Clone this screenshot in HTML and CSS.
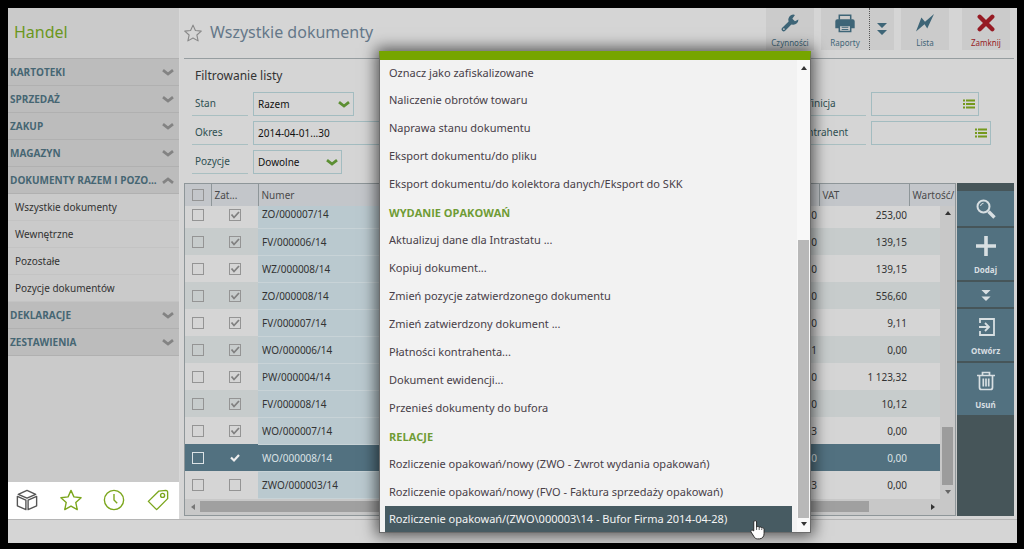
FILE: index.html
```html
<!DOCTYPE html>
<html lang="pl">
<head>
<meta charset="utf-8">
<title>Handel - Wszystkie dokumenty</title>
<link rel="stylesheet" href="styles.css">
</head>
<body>
<svg class="defs" aria-hidden="true">
  <symbol id="chev" viewBox="0 0 12 7"><path d="M1 1.200 6 5 11 1.200" fill="none" stroke="currentColor" stroke-width="2.800"/></symbol>
  <symbol id="list" viewBox="0 0 12 10"><path d="M0 1.500h2M0 5h2M0 8.500h2M3 1.500h9M3 5h9M3 8.500h9" fill="none" stroke="currentColor" stroke-width="1.800"/></symbol>
  <symbol id="dbl" viewBox="0 0 10 12"><path d="M0 0h10L5 5zM0 7h10L5 12z" fill="currentColor"/></symbol>
  <symbol id="star" viewBox="0 0 24 24"><path d="M12 1.500 15.200 8.600l7.800.9-5.800 5.200 1.600 7.800L12 18.600 5.200 22.500l1.600-7.800L1 9.500l7.800-.9z" fill="none" stroke="currentColor" stroke-width="1.500" stroke-linejoin="round"/></symbol>
</svg>
<div class="app">
  <div class="body">
    <aside class="side">
      <h1 class="brand">Handel</h1>
      <nav class="nav">
        <button class="group">KARTOTEKI<svg class="chev"><use href="#chev"/></svg></button>
        <button class="group">SPRZEDAŻ<svg class="chev"><use href="#chev"/></svg></button>
        <button class="group">ZAKUP<svg class="chev"><use href="#chev"/></svg></button>
        <button class="group">MAGAZYN<svg class="chev"><use href="#chev"/></svg></button>
        <button class="group">DOKUMENTY RAZEM I POZO...<svg class="chev up"><use href="#chev"/></svg></button>
        <a class="item" href="#">Wszystkie dokumenty</a>
        <a class="item" href="#">Wewnętrzne</a>
        <a class="item" href="#">Pozostałe</a>
        <a class="item" href="#">Pozycje dokumentów</a>
        <button class="group">DEKLARACJE<svg class="chev"><use href="#chev"/></svg></button>
        <button class="group">ZESTAWIENIA<svg class="chev"><use href="#chev"/></svg></button>
      </nav>
      <div class="tabs">
        <button class="tab dark" aria-label="Moduły"><svg viewBox="0 0 24 24"><path d="M12 1.500 21.500 5.800 12 10 2.500 5.800zM1.500 8 10.800 12.200V22.500L1.500 18.300zM22.500 8 13.200 12.200V22.500l9.300-4.200z"/></svg></button>
        <button class="tab" aria-label="Ulubione"><svg><use href="#star"/></svg></button>
        <button class="tab" aria-label="Historia"><svg viewBox="0 0 24 24"><circle cx="12" cy="12" r="10.500"/><path d="M12 5.500V12l3.500 3.500"/></svg></button>
        <button class="tab" aria-label="Etykiety"><svg viewBox="0 0 24 24"><path d="M1.500 13.500 13 2.300 20.500 1.500q2 0 2 2v7L10.500 22.500z"/><circle cx="17" cy="7" r="2.200"/></svg></button>
      </div>
    </aside>
    <main class="main">
      <header class="head">
        <svg class="fav"><use href="#star"/></svg>
        <h2 class="title">Wszystkie dokumenty</h2>
        <div class="tools">
          <button class="tool"><svg viewBox="0 0 20 20"><path d="M3 17 11 9" stroke="currentColor" stroke-width="4.600" stroke-linecap="round"/><path d="M15.500 1A5.600 5.600 0 1 0 19.300 6l-3.800 2-2.900-2.600z" fill="currentColor"/><circle cx="3.200" cy="16.800" r="1" fill="#cbcbcb"/></svg>Czynności</button>
          <div class="split">
            <button class="tool"><svg class="wide" viewBox="0 0 22 20"><path d="M5 6V1.200h12V6" fill="none" stroke="currentColor" stroke-width="1.600"/><path d="M3 5.500h16a2.200 2.200 0 0 1 2.200 2.200V15h-4v-3.500H4.800V15h-4V7.700A2.200 2.200 0 0 1 3 5.500z" fill="currentColor"/><path d="M5 12v6.500h12V12z" fill="#cbcbcb" stroke="currentColor" stroke-width="1.600"/><path d="M7.500 14h7M7.500 16.300h7" stroke="currentColor"/></svg>Raporty</button>
            <button class="more" aria-label="Więcej raportów"><svg><use href="#dbl"/></svg></button>
          </div>
          <button class="tool"><svg viewBox="0 0 20 20"><path d="M20 0 12.500 16 9.500 11.500 0 19.500 6 4l4 4.500z" fill="currentColor"/></svg>Lista</button>
          <button class="tool close"><svg viewBox="0 0 20 20"><path d="m3 3 14 14M17 3 3 17" stroke="currentColor" stroke-width="4.800" stroke-linecap="round"/></svg>Zamknij</button>
        </div>
      </header>
      <section class="filter">
        <h3 class="filter-title">Filtrowanie listy</h3>
        <div class="fields">
          <div class="row"><label for="stan">Stan</label><div class="ctl w-l"><select id="stan"><option>Razem</option></select><svg class="chev"><use href="#chev"/></svg></div></div>
          <div class="row"><label for="def" class="right-label">Definicja</label><div class="ctl w-l2"><input id="def" type="text"><svg class="list"><use href="#list"/></svg></div></div>
          <div class="row"><label for="okres">Okres</label><div class="ctl w-xl"><input id="okres" type="text" value="2014-04-01...30"></div></div>
          <div class="row"><label for="kon" class="right-label">Kontrahent</label><div class="ctl w-xl2"><input id="kon" type="text"><svg class="list"><use href="#list"/></svg></div></div>
          <div class="row"><label for="poz">Pozycje</label><div class="ctl w-m"><select id="poz"><option>Dowolne</option></select><svg class="chev"><use href="#chev"/></svg></div></div>
        </div>
      </section>
      <section class="work">
        <div class="grid">
          <table>
            <colgroup><col class="c-sel"><col class="c-zat"><col class="c-num"><col class="c-mid"><col class="c-vat"><col class="c-val"></colgroup>
            <thead><tr><th><input type="checkbox" aria-label="Zaznacz wszystkie"></th><th>Zat...</th><th>Numer</th><th></th><th>VAT</th><th>Wartość/</th></tr></thead>
            <tbody>
              <tr><td><input type="checkbox" aria-label="Zaznacz"></td><td><input type="checkbox" aria-label="Zatwierdzony" checked></td><td>ZO/000007/14</td><td>0</td><td>253,00</td><td></td></tr>
              <tr><td><input type="checkbox" aria-label="Zaznacz"></td><td><input type="checkbox" aria-label="Zatwierdzony" checked></td><td>FV/000006/14</td><td>0</td><td>139,15</td><td></td></tr>
              <tr><td><input type="checkbox" aria-label="Zaznacz"></td><td><input type="checkbox" aria-label="Zatwierdzony" checked></td><td>WZ/000008/14</td><td>0</td><td>139,15</td><td></td></tr>
              <tr><td><input type="checkbox" aria-label="Zaznacz"></td><td><input type="checkbox" aria-label="Zatwierdzony" checked></td><td>ZO/000008/14</td><td>0</td><td>556,60</td><td></td></tr>
              <tr><td><input type="checkbox" aria-label="Zaznacz"></td><td><input type="checkbox" aria-label="Zatwierdzony" checked></td><td>FV/000007/14</td><td>0</td><td>9,11</td><td></td></tr>
              <tr><td><input type="checkbox" aria-label="Zaznacz"></td><td><input type="checkbox" aria-label="Zatwierdzony" checked></td><td>WO/000006/14</td><td>1</td><td>0,00</td><td></td></tr>
              <tr><td><input type="checkbox" aria-label="Zaznacz"></td><td><input type="checkbox" aria-label="Zatwierdzony" checked></td><td>PW/000004/14</td><td>0</td><td>1 123,32</td><td></td></tr>
              <tr><td><input type="checkbox" aria-label="Zaznacz"></td><td><input type="checkbox" aria-label="Zatwierdzony" checked></td><td>FV/000008/14</td><td>0</td><td>10,12</td><td></td></tr>
              <tr><td><input type="checkbox" aria-label="Zaznacz"></td><td><input type="checkbox" aria-label="Zatwierdzony" checked></td><td>WO/000007/14</td><td>3</td><td>0,00</td><td></td></tr>
              <tr class="current"><td><input type="checkbox" aria-label="Zaznacz"></td><td><input type="checkbox" aria-label="Zatwierdzony" checked></td><td>WO/000008/14</td><td>0</td><td>0,00</td><td></td></tr>
              <tr><td><input type="checkbox" aria-label="Zaznacz"></td><td><input type="checkbox" aria-label="Zatwierdzony"></td><td>ZWO/000003/14</td><td>3</td><td>0,00</td><td></td></tr>
            </tbody>
          </table>
          <div class="hscroll"><i class="tri left"></i><div class="hthumb"></div><i class="tri right"></i></div>
          <div class="vscroll"><i class="tri up"></i><div class="vthumb"></div><i class="tri down"></i></div>
        </div>
        <div class="dock">
          <button class="act short" aria-label="Szukaj"><svg viewBox="0 0 20 20"><circle cx="7.500" cy="7.500" r="6" fill="none" stroke="currentColor" stroke-width="2"/><path d="M4.500 7a3.200 3.200 0 0 1 3-2.700" fill="none" stroke="currentColor"/><path d="m12.500 12.500 6 6" stroke="currentColor" stroke-width="3.400"/></svg></button>
          <button class="act"><svg viewBox="0 0 20 20"><path d="M10 0v20M0 10h20" stroke="currentColor" stroke-width="3.600"/></svg>Dodaj</button>
          <button class="act tiny" aria-label="Więcej"><svg class="dbl"><use href="#dbl"/></svg></button>
          <button class="act"><svg viewBox="0 0 20 20"><path d="M4 6V2h14v16H4v-4M3 10h9.500M9 6l4 4-4 4" fill="none" stroke="currentColor" stroke-width="1.800"/></svg>Otwórz</button>
          <button class="act"><svg viewBox="0 0 20 20"><path d="M1 4.500h18M6.500 4V1.500h7V4M3.500 5v11.500a2 2 0 0 0 2 2h9a2 2 0 0 0 2-2V5M7.300 7.500v8M10 7.500v8M12.700 7.500v8" fill="none" stroke="currentColor" stroke-width="1.700"/></svg>Usuń</button>
        </div>
      </section>
    </main>
  </div>
  <footer class="status"></footer>
  <div class="menu">
    <div class="menu-list">
      <button>Oznacz jako zafiskalizowane</button>
      <button>Naliczenie obrotów towaru</button>
      <button>Naprawa stanu dokumentu</button>
      <button>Eksport dokumentu/do pliku</button>
      <button>Eksport dokumentu/do kolektora danych/Eksport do SKK</button>
      <h4>WYDANIE OPAKOWAŃ</h4>
      <button>Aktualizuj dane dla Intrastatu ...</button>
      <button>Kopiuj dokument...</button>
      <button>Zmień pozycje zatwierdzonego dokumentu</button>
      <button>Zmień zatwierdzony dokument ...</button>
      <button>Płatności kontrahenta...</button>
      <button>Dokument ewidencji...</button>
      <button>Przenieś dokumenty do bufora</button>
      <h4>RELACJE</h4>
      <button>Rozliczenie opakowań/nowy (ZWO - Zwrot wydania opakowań)</button>
      <button>Rozliczenie opakowań/nowy (FVO - Faktura sprzedaży opakowań)</button>
      <button class="active">Rozliczenie opakowań/(ZWO\000003\14 - Bufor Firma 2014-04-28)</button>
    </div>
    <div class="menu-scroll"><i class="tri up"></i><div class="mthumb"></div><i class="tri down"></i></div>
    <svg class="hand" viewBox="0 0 16 21"><path d="M4 12V2.500a1.500 1.500 0 0 1 3 0V8c.5-1 2.500-1 2.800.3.700-.8 2.400-.6 2.700.6.900-.5 2.500 0 2.500 1.400V15c0 3-2 5.500-5 5.500H8c-2 0-3-1-4-2.800L1 13c-.5-1.500 1.200-2.500 2.200-1.400z" fill="#fff" stroke="#222"/><path d="M7 8v3M9.800 8.500V11M12.500 9.500V11" stroke="#222" stroke-width=".8"/></svg>
  </div>
</div>
</body>
</html>
```
FILE: styles.css
```css
* { box-sizing: border-box; }
body {
  margin: 0;
  padding: 8px 7px 7px 8px;
  min-height: 100vh;
  display: flex;
  background: #000;
  color: #333;
  font-family: "Noto Sans", "Open Sans", sans-serif;
  font-size: 10px;
}
h1, h2, h3, h4 { margin: 0; font-weight: 400; }
button, input, select { font: inherit; color: inherit; border: 0; padding: 0; margin: 0; background: none; border-radius: 0; }
.defs { position: absolute; width: 0; height: 0; }
.app { position: relative; flex: 1; display: flex; flex-direction: column; background: #d5d5d5; min-width: 0; }
.body { flex: 1; display: flex; }
.status { height: 24px; border-top: 1px solid #b5b5b5; }

.side { width: 172px; display: flex; flex-direction: column; background: #cacaca; border-right: 1px solid #d8d8d8; }
.brand { height: 51px; padding-left: 6px; line-height: 48px; font-size: 16px; color: #6b971d; border-bottom: 1px solid #b0b0b0; }
.nav { display: flex; flex-direction: column; }
.group {
  display: flex; align-items: center; justify-content: space-between;
  height: 27px; padding: 0 5px 0 2px;
  background: #bcbcbc; border-bottom: 1px solid #b0b0b0;
  color: #466673; font-family: "Open Sans", sans-serif; font-weight: 700; white-space: nowrap;
}
.chev { width: 12px; height: 7px; color: #838383; flex: none; }
.chev.up { transform: rotate(180deg); }
.item { height: 27px; padding-left: 7px; line-height: 26px; color: #333; text-decoration: none; border-bottom: 1px solid #c3c3c3; }
.tabs { margin-top: auto; height: 37px; background: #fff; display: flex; justify-content: space-between; align-items: center; padding: 0 10px 0 8px; }
.tab { width: 22px; height: 22px; color: #7ba61c; }
.tab svg { display: block; width: 22px; height: 22px; fill: none; stroke: currentColor; stroke-width: 1.5; stroke-linejoin: round; }
.tab.dark { color: #555; }

.main { flex: 1; min-width: 0; display: flex; flex-direction: column; padding: 0 3px 3px 4px; }
.head { height: 51px; display: flex; border-bottom: 1px solid #969da0; }
.fav { width: 18px; height: 18px; margin: 16px 8px 0 0; color: #888; }
.title { flex: 1; line-height: 49px; font-size: 16px; color: #657889; }
.tools { display: flex; align-items: flex-start; padding-right: 4px; }
.tool { width: 48px; height: 42px; display: flex; flex-direction: column; align-items: center; justify-content: space-between; padding: 6px 0 0; background: #cbcbcb; color: #3e6577; font-size: 8px; line-height: 14px; }
.tool svg { width: 18px; height: 18px; }
.tool svg.wide { width: 22px; height: 19px; }
.split { display: flex; margin: 0 7px; }
.more { width: 25px; height: 42px; background: #cbcbcb; border-left: 1px dotted #555; color: #3e6577; }
.more svg { width: 10px; height: 12px; display: block; margin: 0 auto; }
.tool.close { color: #961b24; margin-left: 13px; }

.filter { padding: 0 0 9px 8px; }
.filter-title { height: 33px; padding-left: 3px; line-height: 33px; font-size: 12px; }
.fields { display: grid; grid-template-columns: 1fr 222px; row-gap: 5px; }
.row { display: flex; gap: 5px; height: 24px; min-width: 0; }
.row label { width: 56px; padding-left: 3px; line-height: 23px; color: #2f5052; border-bottom: 1px solid #a9bfc1; }
.row .right-label { width: 74px; }
.ctl { position: relative; height: 24px; border: 1px solid #a3bcc0; color: #111; }
.ctl select, .ctl input { width: 100%; height: 22px; padding: 0 4px; appearance: none; display: block; outline: 0; }
.ctl .chev { position: absolute; right: 3px; top: 8px; color: #5c8f33; pointer-events: none; }
.ctl .list { position: absolute; right: 3px; top: 6px; width: 12px; height: 10px; color: #75991c; }
.w-m { width: 89px; }
.w-l { width: 101px; }
.w-l2 { width: 108px; }
.w-xl { width: 180px; }
.w-xl2 { width: 120px; }

.work { flex: 1; display: flex; }
.grid { flex: 1; min-width: 0; position: relative; border: 1px solid #8e9699; display: flex; flex-direction: column; }
table { width: 100%; table-layout: fixed; border-collapse: collapse; }
.c-sel { width: 26px; }
.c-zat { width: 47px; }
.c-mid { width: 80px; }
.c-vat { width: 90px; }
.c-val { width: 46px; }
th { height: 22px; padding: 0 0 0 3px; background: #c3c6ca; color: #4a4a4a; font-weight: 400; text-align: left; border-left: 1px solid #8e9699; white-space: nowrap; }
th:first-child { border-left: 0; }
td { height: 27px; padding: 0 4px; }
tbody tr:first-child td { height: 22px; padding-bottom: 5px; }
tbody tr { background: #d5d5d5; }
tbody tr:nth-child(even) { background: #c7cccc; }
th:first-child, td:nth-child(-n+2) { text-align: center; padding-left: 0; padding-right: 0; }
td:nth-child(3) { background: #bac9cf; border-bottom: 1px solid #c8d3d7; }
td:nth-child(4), td:nth-child(5) { text-align: right; padding-right: 2px; }
tbody tr.current, tbody tr.current td { background: #527180; color: #dbe2e5; }
th input, td input { appearance: none; display: block; width: 12px; height: 12px; margin: 0 auto; border: 1px solid #949494; }
td input:checked { background: no-repeat center / 10px 10px url("data:image/svg+xml,%3Csvg xmlns='http://www.w3.org/2000/svg' viewBox='0 0 10 10'%3E%3Cpath d='M1.500 4.500 4 7.500 9 2' fill='none' stroke='%23808080' stroke-width='1.800'/%3E%3C/svg%3E"); }
.current input { border-color: #dbe2e5; }
.current td input:checked { border-color: transparent; background-image: url("data:image/svg+xml,%3Csvg xmlns='http://www.w3.org/2000/svg' viewBox='0 0 10 10'%3E%3Cpath d='M1 4.500 4 7.500 9 2' fill='none' stroke='%23eee' stroke-width='2.200'/%3E%3C/svg%3E"); }
.hscroll { flex: 1; min-height: 16px; display: flex; align-items: center; justify-content: space-between; padding: 0 20px 0 6px; background: #c8c8c8; }
.hthumb { flex: 1; height: 11px; margin: 0 62px 0 5px; background: #a0a0a0; }
.vscroll { position: absolute; right: 0; top: 22px; bottom: 16px; width: 15px; background: #c8c8c8; display: flex; flex-direction: column; align-items: center; padding: 5px 0; }
.vthumb { width: 11px; height: 58px; margin: auto 0 5px; background: #9c9c9c; }
.tri { width: 0; height: 0; border: 3px solid transparent; flex: none; }
.tri.up { border-top: 0; border-bottom: 4px solid #333; }
.tri.down { border-bottom: 0; border-top: 4px solid #666; }
.tri.left { border-left: 0; border-right: 4px solid #777; }
.tri.right { border-right: 0; border-left: 4px solid #333; }

.dock { width: 58px; padding-top: 8px; background: #465559; display: flex; flex-direction: column; gap: 2px; border-left: 1px solid #c8c8c8; }
.act { height: 52px; display: flex; flex-direction: column; align-items: center; justify-content: space-between; padding: 8px 0 3px; background: #527180; color: #d8dfe2; font-size: 8px; font-weight: 700; line-height: 14px; }
.act svg { width: 20px; height: 20px; }
.act.short { height: 35px; }
.act.tiny { height: 25px; }
.act .dbl { width: 10px; height: 11px; }

.menu { position: absolute; left: 371px; top: 43px; width: 432px; display: flex; justify-content: space-between; background: #f2f2f2; border: 1px solid #6c6c6c; border-top: 9px solid #76a500; box-shadow: 0 0 14px 3px rgba(0, 0, 0, .6); font-size: 11px; }
.menu-list { width: 412px; padding-left: 5px; display: flex; flex-direction: column; color: #484048; }
.menu-list button, .menu-list h4 { height: 28px; padding-left: 4px; text-align: left; line-height: 26px; white-space: nowrap; }
.menu-list h4 { color: #6f9c35; font-family: "Open Sans", sans-serif; font-weight: 700; line-height: 30px; }
.menu-list button:first-child { height: 26px; line-height: 26px; }
.menu-list .active { height: 26px; background: #475b62; color: #f4f4f4; }
.menu-scroll { width: 13px; display: flex; flex-direction: column; align-items: center; gap: 4px; padding: 6px 0; background: #f8f8f8; }
.mthumb { width: 11px; height: 278px; margin-top: auto; background: #b8b8b8; }
.menu-scroll .tri.down { border-top-color: #333; }
.hand { position: absolute; left: 370px; top: 459px; width: 15px; height: 21px; }
```
